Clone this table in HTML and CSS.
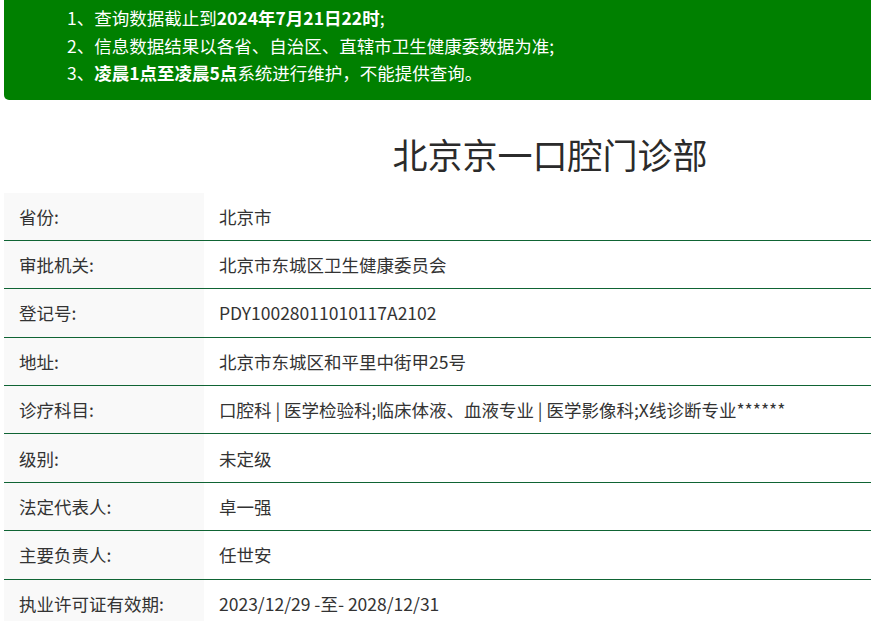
FILE: index.html
```html
<!DOCTYPE html>
<html lang="zh-CN">
<head>
<meta charset="utf-8">
<title>北京京一口腔门诊部</title>
<link rel="stylesheet" href="styles.css">
</head>
<body>
<div class="page">
  <div class="notice">
    <p>1、查询数据截止到<b>2024年7月21日22时</b>;</p>
    <p>2、信息数据结果以各省、自治区、直辖市卫生健康委数据为准;</p>
    <p>3、<b>凌晨1点至凌晨5点</b>系统进行维护，不能提供查询。</p>
  </div>
  <h1 class="title">北京京一口腔门诊部</h1>
  <div class="info">
    <div class="row"><div class="label">省份:</div><div class="value">北京市</div></div>
    <div class="row"><div class="label">审批机关:</div><div class="value">北京市东城区卫生健康委员会</div></div>
    <div class="row"><div class="label">登记号:</div><div class="value">PDY10028011010117A2102</div></div>
    <div class="row"><div class="label">地址:</div><div class="value">北京市东城区和平里中街甲25号</div></div>
    <div class="row"><div class="label">诊疗科目:</div><div class="value">口腔科 | 医学检验科;临床体液、血液专业 | 医学影像科;X线诊断专业******</div></div>
    <div class="row"><div class="label">级别:</div><div class="value">未定级</div></div>
    <div class="row"><div class="label">法定代表人:</div><div class="value">卓一强</div></div>
    <div class="row"><div class="label">主要负责人:</div><div class="value">任世安</div></div>
    <div class="row"><div class="label">执业许可证有效期:</div><div class="value">2023/12/29 -至- 2028/12/31</div></div>
  </div>
</div>
</body>
</html>
```

FILE: styles.css
```css
html, body {
  margin: 0;
  padding: 0;
  background: #fff;
  overflow: hidden;
}
body {
  font-family: "Noto Sans CJK SC", "Noto Sans", sans-serif;
  color: #333;
  font-size: 17.5px;
}
.page {
  width: 1092px;
  margin-left: 4px;
}
.notice {
  background: #008000;
  color: #fff;
  border-radius: 0 0 5px 5px;
  padding: 4px 0 13px 63px;
}
.notice p {
  margin: 0;
  line-height: 27.5px;
}
.notice b {
  font-weight: 700;
}
.title {
  margin: 29px 0 14px;
  font-size: 35px;
  font-weight: 400;
  line-height: 50px;
  text-align: center;
  color: #2b2b2b;
}
.row {
  display: flex;
  height: 47.4px;
  border-bottom: 1px solid #0f6434;
}
.label {
  width: 185px;
  padding-left: 15px;
  background: #f9f9f9;
  display: flex;
  align-items: center;
}
.value {
  flex: 1;
  padding-left: 15px;
  display: flex;
  align-items: center;
}
```
